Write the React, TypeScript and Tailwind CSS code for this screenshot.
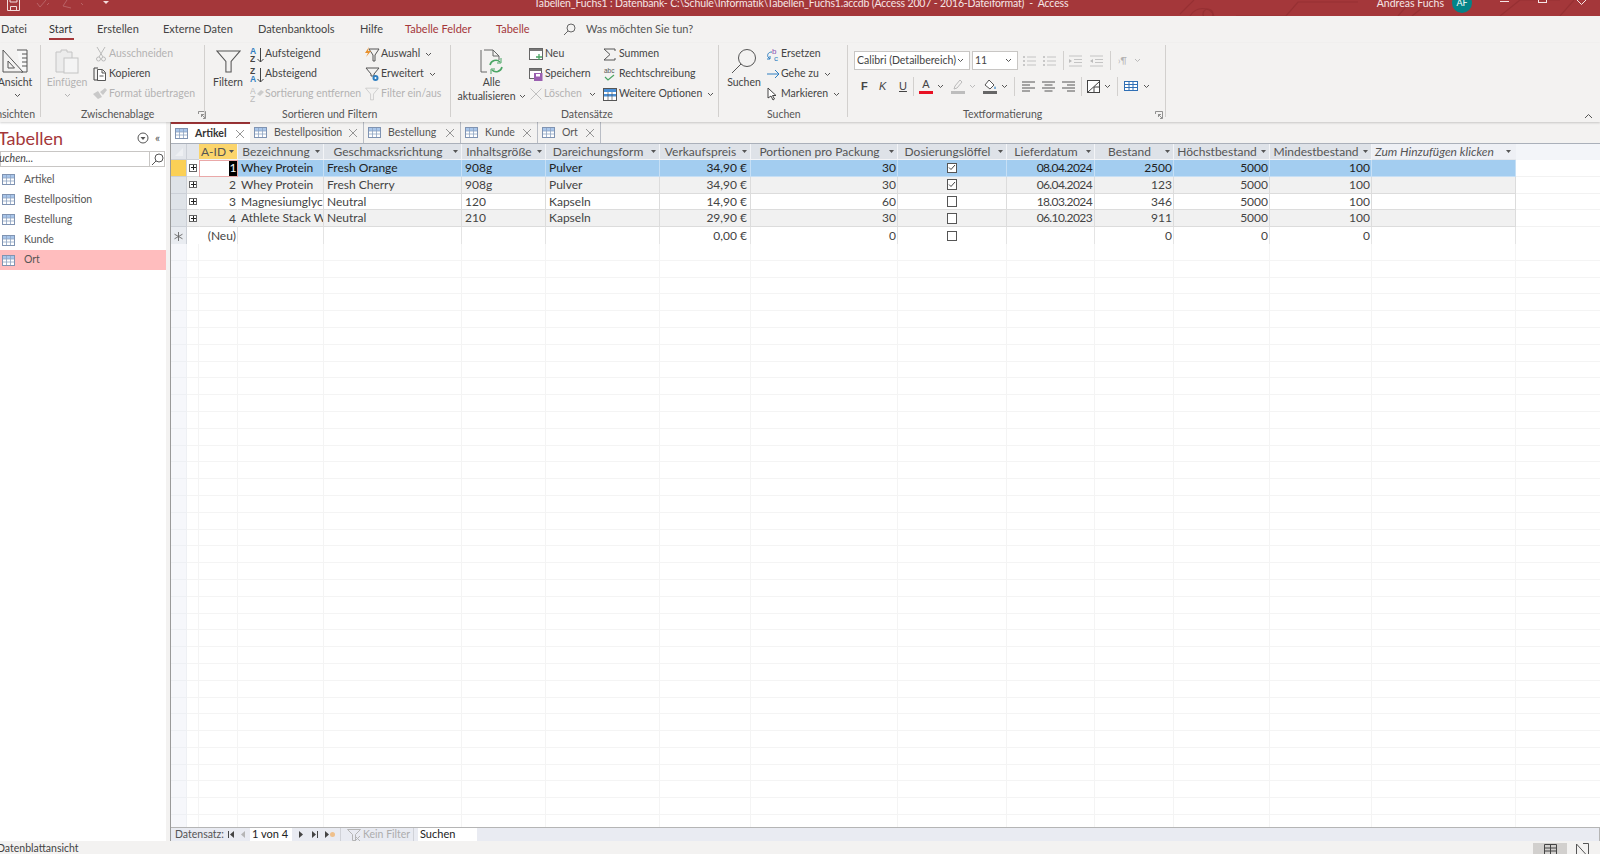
import React from "react";

const GRID_COLS =
  "grid grid-cols-[16px_12px_39px_86px_138px_84px_114px_91px_147px_109px_88px_79px_96px_102px_144px_1fr]";

const columns = [
  "A-ID",
  "Bezeichnung",
  "Geschmacksrichtung",
  "Inhaltsgröße",
  "Dareichungsform",
  "Verkaufspreis",
  "Portionen pro Packung",
  "Dosierungslöffel",
  "Lieferdatum",
  "Bestand",
  "Höchstbestand",
  "Mindestbestand",
];

const rows = [
  ["1", "Whey Protein", "Fresh Orange", "908g", "Pulver", "34,90 €", "30", true, "08.04.2024", "2500", "5000", "100"],
  ["2", "Whey Protein", "Fresh Cherry", "908g", "Pulver", "34,90 €", "30", true, "06.04.2024", "123", "5000", "100"],
  ["3", "Magnesiumglycinat", "Neutral", "120", "Kapseln", "14,90 €", "60", false, "18.03.2024", "346", "5000", "100"],
  ["4", "Athlete Stack Whey", "Neutral", "210", "Kapseln", "29,90 €", "30", false, "06.10.2023", "911", "5000", "100"],
];

const navItems = ["Artikel", "Bestellposition", "Bestellung", "Kunde", "Ort"];

function Chevron({ color = "#555" }: { color?: string }) {
  return (
    <svg width="7" height="5" viewBox="0 0 7 5" className="shrink-0">
      <path d="M1 1l2.500 2.500L6 1" fill="none" stroke={color} strokeWidth="1" />
    </svg>
  );
}

function SortArrow() {
  return (
    <svg width="5" height="3" viewBox="0 0 5 3" className="shrink-0">
      <path d="M0 0h5L2.500 3z" fill="#555" />
    </svg>
  );
}

function TableIcon({ w = 13, h = 11 }: { w?: number; h?: number }) {
  return (
    <svg width={w} height={h} viewBox="0 0 13 11" className="shrink-0">
      <rect x="0.500" y="0.500" width="12" height="10" fill="#fff" stroke="#7f93b2" />
      <rect x="1" y="1" width="11" height="3" fill="#a9c6ea" />
      <path d="M4.500 1v9M8.500 1v9M1 4h11M1 7h11" stroke="#8ea3c2" strokeWidth="0.8" fill="none" />
    </svg>
  );
}

function CloseX() {
  return (
    <svg width="10" height="10" viewBox="0 0 10 10" className="shrink-0">
      <path d="M1 1l8 8M9 1l-8 8" stroke="#8a8a8a" strokeWidth="0.9" fill="none" />
    </svg>
  );
}

function Funnel({ color = "#555", size = 24 }: { color?: string; size?: number }) {
  return (
    <svg width={size} height={size} viewBox="0 0 24 24" className="shrink-0">
      <path d="M1 2h22L14.500 12v10h-5V12z" fill="none" stroke={color} strokeWidth="1" />
    </svg>
  );
}

function Small({
  icon,
  text,
  slot = "w-[16px]",
  disabled = false,
  chevron = false,
}: {
  icon: React.ReactNode;
  text: string;
  slot?: string;
  disabled?: boolean;
  chevron?: boolean;
}) {
  return (
    <div className={`flex h-[20px] items-center whitespace-nowrap ${disabled ? "text-[#b3b3b3]" : "text-[#444]"}`}>
      <span className={`flex shrink-0 items-center justify-start ${slot}`}>{icon}</span>
      <span>{text}</span>
      {chevron && (
        <span className="ml-[5px]">
          <Chevron />
        </span>
      )}
    </div>
  );
}

function Sep() {
  return <div className="mt-[2px] h-[72px] w-px shrink-0 bg-[#d2d0ce]" />;
}

function Expander() {
  return (
    <svg width="8" height="8" viewBox="0 0 8 8" className="shrink-0">
      <path d="M0.500 3V0.500H7.500V7.500H5M7 7L3.500 3.500M3.500 6V3.500H6" fill="none" stroke="#777" strokeWidth="0.8" />
    </svg>
  );
}

function TitleBar() {
  return (
    <div className="relative flex h-[16px] shrink-0 items-start overflow-hidden bg-[#a4373a] text-[10.500px] text-[#f6e6e6]">
      <svg width="1600" height="16" viewBox="0 0 1600 16" className="absolute left-0 top-0">
        <g fill="none" stroke="#963033" strokeWidth="1.2">
          <path d="M1180 14l14-14M1190 16c6-10 20-10 24 0M1236 16h50l12-14h60M1398 16l14-16M1412 16l20-16M1500 16l20-16h40M1560 16l14-16" />
          <circle cx="1208" cy="14" r="5" />
        </g>
      </svg>
      <svg width="13" height="11" viewBox="0 0 13 11" className="relative ml-[7px] shrink-0">
        <path d="M0.500 0v10.500h12V0M3.500 10.500V6.500h6v4M3 0v2h7V0" fill="none" stroke="#f3dcdc" />
      </svg>
      <svg width="50" height="9" viewBox="0 0 50 9" className="relative ml-[15px] shrink-0">
        <path d="M2 3l3 4 6-7M14 3l-2 2M32 0l-4 6 8 2M46 3l2 2" fill="none" stroke="#b96366" />
      </svg>
      <svg width="6" height="3" viewBox="0 0 6 3" className="relative ml-[18px] mt-[1px] shrink-0">
        <path d="M0 0h6L3 3z" fill="#f3dcdc" />
      </svg>
      <span className="relative ml-[425px] -mt-[4px] whitespace-pre tracking-[-0.150px]">
        {"Tabellen_Fuchs1 : Datenbank- C:\\Schule\\Informatik\\Tabellen_Fuchs1.accdb (Access 2007 - 2016-Dateiformat)  -  Access"}
      </span>
      <span className="relative ml-auto -mt-[4px] whitespace-nowrap">Andreas Fuchs</span>
      <span className="relative ml-[8px] -mt-[7px] flex h-[20px] w-[20px] shrink-0 items-center justify-center rounded-full bg-[#038387] text-[9px] text-white">
        AF
      </span>
      <span className="relative ml-[28px] mt-[1px] h-px w-[9px] shrink-0 bg-[#f6e6e6]" />
      <span className="relative ml-[29px] -mt-[4px] h-[7px] w-[9px] shrink-0 border border-[#f6e6e6]" />
      <svg width="9" height="5" viewBox="0 0 9 5" className="relative ml-[30px] mr-[14px] shrink-0">
        <path d="M4.500 4.500L0 0M4.500 4.500L9 0" stroke="#f6e6e6" fill="none" />
      </svg>
    </div>
  );
}

function RibbonTabs() {
  return (
    <div className="flex h-[27px] shrink-0 items-start whitespace-nowrap bg-[#f3f2f1] pt-[4px] text-[11px] leading-[18px] text-[#444]">
      <span className="ml-[1px] w-[48px]">Datei</span>
      <span className="flex h-[20px] w-[48px] flex-col">
        <span className="w-[24px] text-[#333]">Start</span>
        <span className="h-[2px] w-[25px] bg-[#a4373a]" />
      </span>
      <span className="w-[66px]">Erstellen</span>
      <span className="w-[95px]">Externe Daten</span>
      <span className="w-[102px]">Datenbanktools</span>
      <span className="w-[45px]">Hilfe</span>
      <span className="w-[91px] text-[#a4373a]">Tabelle Felder</span>
      <span className="w-[67px] text-[#a4373a]">Tabelle</span>
      <svg width="13" height="13" viewBox="0 0 13 13" className="mt-[3px] shrink-0">
        <circle cx="8" cy="5" r="4" fill="none" stroke="#666" />
        <path d="M5 8l-4 4" stroke="#666" />
      </svg>
      <span className="ml-[10px] text-[#555]">Was möchten Sie tun?</span>
    </div>
  );
}

function Label({ text, cls }: { text: string; cls: string }) {
  return (
    <div className={`mt-auto flex h-[14px] items-center whitespace-nowrap text-[10.500px] text-[#555] ${cls}`}>
      {text}
    </div>
  );
}

function Big({
  icon,
  lines,
  cls,
  disabled = false,
  chevronLine = false,
}: {
  icon: React.ReactNode;
  lines: string[];
  cls: string;
  disabled?: boolean;
  chevronLine?: boolean;
}) {
  return (
    <div className={`flex shrink-0 flex-col items-center whitespace-nowrap pt-[5px] ${cls} ${disabled ? "text-[#b3b3b3]" : "text-[#444]"}`}>
      <span className="flex h-[26px] items-center">{icon}</span>
      {lines.map((l, i) => (
        <span key={l} className="mt-[2px] flex h-[12px] items-center leading-[12px]">
          {l}
          {chevronLine && i === lines.length - 1 && (
            <span className="ml-[3px]">
              <Chevron />
            </span>
          )}
        </span>
      ))}
    </div>
  );
}

const dim = "#b8b8b8";

function Ribbon() {
  return (
    <div className="relative z-10 flex h-[79px] shrink-0 bg-[#f3f2f1] text-[10.500px] shadow-[0_1px_2px_rgba(0,0,0,0.18)]">
      {/* Ansichten */}
      <div className="flex w-[40px] shrink-0 flex-col overflow-hidden">
        <Big
          cls="-ml-[2px] w-[34px]"
          lines={["Ansicht"]}
          icon={
            <svg width="26" height="24" viewBox="0 0 26 24">
              <path d="M15 1h10v22h-6" fill="#f8f8f8" stroke="#555" />
              <path d="M20 5h5M20 9h5M20 13h5M20 17h5" stroke="#555" />
              <path d="M1 1l20 22H1zM6 12l6.500 7H6z" fill="#f3f2f1" stroke="#555" />
            </svg>
          }
        />
        <div className="mt-[5px] flex justify-center pr-[5px]">
          <Chevron />
        </div>
        <Label text="Ansichten" cls="justify-end pr-[5px]" />
      </div>
      <Sep />
      {/* Zwischenablage */}
      <div className="flex w-[163px] shrink-0 flex-col">
        <div className="flex">
          <div className="flex w-[52px] flex-col items-center">
            <Big
              cls=""
              disabled
              lines={["Einfügen"]}
              icon={
                <svg width="24" height="25" viewBox="0 0 24 25">
                  <path d="M1 3h5V1h6v2h5v20H1z" fill="#ececec" stroke="#c4c4c4" />
                  <rect x="9" y="9" width="14" height="15" fill="#f4f4f4" stroke="#c4c4c4" />
                </svg>
              }
            />
            <div className="mt-[5px]">
              <Chevron color="#b3b3b3" />
            </div>
          </div>
          <div className="flex flex-col pt-[1px]">
            <Small
              disabled
              text="Ausschneiden"
              icon={
                <svg width="10" height="15" viewBox="0 0 10 15" className="ml-[3px]">
                  <path d="M1 0l6 10M9 0L3 10" stroke="#bbb" fill="none" />
                  <circle cx="2.500" cy="12" r="2" fill="none" stroke="#bbb" />
                  <circle cx="7.500" cy="12" r="2" fill="none" stroke="#bbb" />
                </svg>
              }
            />
            <Small
              text="Kopieren"
              icon={
                <svg width="14" height="14" viewBox="0 0 14 14">
                  <path d="M5 1H1v12h4" fill="none" stroke="#444" />
                  <path d="M4.500 2.500h5l3 3v8h-8zM9 3v3h3M6.500 9h4" fill="#fff" stroke="#444" strokeWidth="0.9" />
                </svg>
              }
            />
            <Small
              disabled
              text="Format übertragen"
              icon={
                <svg width="14" height="12" viewBox="0 0 14 12">
                  <path d="M0 6l5-3 4 6-4 2zM7 4l5-4 2 2-4 5z" fill="#c9c9c9" />
                </svg>
              }
            />
          </div>
        </div>
        <div className="mt-auto flex h-[14px] items-center pl-[40px] text-[10.500px] text-[#555]">
          <span className="w-[117px] shrink-0">Zwischenablage</span>
          <Expander />
        </div>
      </div>
      <Sep />
      {/* Sortieren und Filtern */}
      <div className="flex w-[245px] shrink-0 flex-col">
        <div className="flex">
          <Big cls="ml-[1px] w-[44px]" lines={["Filtern"]} icon={<Funnel size={25} />} />
          <div className="flex w-[115px] shrink-0 flex-col pt-[1px]">
            <Small
              slot="w-[15px]"
              text="Aufsteigend"
              icon={
                <svg width="14" height="17" viewBox="0 0 14 17">
                  <text x="0" y="7.500" fontSize="8.500" fontWeight="700" fill="#2f7fc1" fontFamily="Liberation Sans">A</text>
                  <text x="0" y="16" fontSize="8.500" fontWeight="700" fill="#444" fontFamily="Liberation Sans">Z</text>
                  <path d="M10.500 2v14M7.500 13l3 3 3-3" fill="none" stroke="#444" />
                </svg>
              }
            />
            <Small
              slot="w-[15px]"
              text="Absteigend"
              icon={
                <svg width="14" height="17" viewBox="0 0 14 17">
                  <text x="0" y="7.500" fontSize="8.500" fontWeight="700" fill="#444" fontFamily="Liberation Sans">Z</text>
                  <text x="0" y="16" fontSize="8.500" fontWeight="700" fill="#2f7fc1" fontFamily="Liberation Sans">A</text>
                  <path d="M10.500 2v14M7.500 13l3 3 3-3" fill="none" stroke="#444" />
                </svg>
              }
            />
            <Small
              slot="w-[15px]"
              disabled
              text="Sortierung entfernen"
              icon={
                <svg width="14" height="17" viewBox="0 0 14 17">
                  <text x="0" y="7.500" fontSize="8.500" fill="#bbb" fontFamily="Liberation Sans">A</text>
                  <text x="0" y="16" fontSize="8.500" fill="#bbb" fontFamily="Liberation Sans">Z</text>
                  <path d="M7 8l4-4 3 2-4 4z" fill="#ccc" />
                </svg>
              }
            />
          </div>
          <div className="flex flex-col pt-[1px]">
            <Small
              text="Auswahl"
              chevron
              icon={
                <svg width="15" height="15" viewBox="0 0 15 15">
                  <path d="M4 2h10L10 8v6H8V8z" fill="none" stroke="#555" />
                  <path d="M4 0L0 6h3L1 10l5-6H3z" fill="#e8912d" />
                </svg>
              }
            />
            <Small
              text="Erweitert"
              chevron
              icon={
                <svg width="15" height="15" viewBox="0 0 15 15">
                  <path d="M1 1h13L9 7v2H6V7z" fill="none" stroke="#555" />
                  <circle cx="10.500" cy="11" r="3" fill="#2f7fc1" />
                  <circle cx="10.500" cy="11" r="1" fill="#fff" />
                </svg>
              }
            />
            <Small disabled text="Filter ein/aus" icon={<Funnel color={dim} size={14} />} />
          </div>
        </div>
        <Label text="Sortieren und Filtern" cls="pl-[77px]" />
      </div>
      <Sep />
      {/* Datensätze */}
      <div className="flex w-[267px] shrink-0 flex-col">
        <div className="flex">
          <Big
            cls="ml-[3px] w-[75px]"
            chevronLine
            lines={["Alle", "aktualisieren"]}
            icon={
              <svg width="25" height="25" viewBox="0 0 25 25">
                <path d="M2 1v22h6M5 1h9l6 6v4M14 1v6h6" fill="none" stroke="#666" />
                <path d="M11 16a6 6 0 0 1 10-3M23 18a6 6 0 0 1-10 3" fill="none" stroke="#4aa564" strokeWidth="1.600" />
                <path d="M22 9v5h-4M12 25v-5h4" fill="none" stroke="#4aa564" />
              </svg>
            }
          />
          <div className="flex w-[74px] shrink-0 flex-col pt-[1px]">
            <Small
              text="Neu"
              icon={
                <svg width="14" height="13" viewBox="0 0 14 13">
                  <rect x="0.500" y="0.500" width="13" height="11" fill="#fff" stroke="#666" />
                  <rect x="1" y="1" width="12" height="2" fill="#777" />
                  <path d="M10 6v6M7 9h6" stroke="#4aa564" strokeWidth="1.300" />
                </svg>
              }
            />
            <Small
              text="Speichern"
              icon={
                <svg width="14" height="13" viewBox="0 0 14 13">
                  <rect x="0.500" y="0.500" width="12" height="10" fill="#fff" stroke="#666" />
                  <rect x="1" y="1" width="11" height="2" fill="#777" />
                  <rect x="5" y="5" width="8.500" height="8" fill="#9a5fb0" />
                  <rect x="7" y="6" width="4" height="2.500" fill="#fff" />
                </svg>
              }
            />
            <div className="flex h-[20px] items-center whitespace-nowrap text-[#b3b3b3]">
              <span className="flex w-[15px] shrink-0 items-center">
                <svg width="12" height="12" viewBox="0 0 12 12" className="ml-[1px]">
                  <path d="M0.500 0.500l11 11M11.500 0.500l-11 11" stroke="#c0c0c0" />
                </svg>
              </span>
              <span className="w-[45px] shrink-0">Löschen</span>
              <Chevron />
            </div>
          </div>
          <div className="flex flex-col pt-[1px]">
            <Small
              text="Summen"
              icon={
                <svg width="13" height="13" viewBox="0 0 13 13">
                  <path d="M12 3V1H1l6 5.500L1 12h11v-2" fill="none" stroke="#555" />
                </svg>
              }
            />
            <Small
              text="Rechtschreibung"
              icon={
                <svg width="13" height="14" viewBox="0 0 13 14">
                  <text x="1" y="6" fontSize="6.500" fill="#555" fontFamily="Liberation Sans">abc</text>
                  <path d="M2 10l3 3 6-5" fill="none" stroke="#4aa564" strokeWidth="1.200" />
                </svg>
              }
            />
            <Small
              text="Weitere Optionen"
              chevron
              icon={
                <svg width="14" height="13" viewBox="0 0 14 13">
                  <rect x="0.500" y="0.500" width="13" height="12" fill="#fff" stroke="#555" />
                  <rect x="1" y="1" width="12" height="3" fill="#4a90d6" />
                  <rect x="1" y="6" width="12" height="2.500" fill="#4a90d6" />
                  <path d="M5 4v8M9 4v8" stroke="#555" strokeWidth="0.700" />
                </svg>
              }
            />
          </div>
        </div>
        <Label text="Datensätze" cls="pl-[110px]" />
      </div>
      <Sep />
      {/* Suchen */}
      <div className="flex w-[128px] shrink-0 flex-col">
        <div className="flex">
          <Big
            cls="ml-[2px] w-[46px]"
            lines={["Suchen"]}
            icon={
              <svg width="26" height="25" viewBox="0 0 26 25">
                <circle cx="16" cy="9" r="8.500" fill="none" stroke="#555" />
                <path d="M10 15L1 24" stroke="#555" />
              </svg>
            }
          />
          <div className="flex flex-col pt-[1px]">
            <Small
              slot="w-[14px]"
              text="Ersetzen"
              icon={
                <svg width="13" height="15" viewBox="0 0 13 15">
                  <text x="5" y="7" fontSize="8" fill="#8a4fb0" fontFamily="Liberation Sans">b</text>
                  <text x="7" y="14" fontSize="8" fill="#2f7fc1" fontFamily="Liberation Sans">c</text>
                  <path d="M5 5C1 5 0 8 1 10l2 2M0 12h3V9" fill="none" stroke="#2f7fc1" />
                </svg>
              }
            />
            <Small
              slot="w-[14px]"
              text="Gehe zu"
              chevron
              icon={
                <svg width="13" height="10" viewBox="0 0 13 10">
                  <path d="M0 5h12M8 1l4 4-4 4" fill="none" stroke="#2f7fc1" />
                </svg>
              }
            />
            <Small
              slot="w-[14px]"
              text="Markieren"
              chevron
              icon={
                <svg width="10" height="14" viewBox="0 0 10 14">
                  <path d="M1 1v10l3-2 2 4 1.500-1-2-3.500h3.500z" fill="#fff" stroke="#444" />
                </svg>
              }
            />
          </div>
        </div>
        <Label text="Suchen" cls="pl-[48px]" />
      </div>
      <Sep />
      <TextFormat />
      <Sep />
      <div className="mb-[3px] ml-auto mr-[7px] mt-auto">
        <svg width="9" height="6" viewBox="0 0 9 6">
          <path d="M1 5l3.500-3.500L8 5" fill="none" stroke="#555" />
        </svg>
      </div>
    </div>
  );
}

function ListIcon({ variant }: { variant: number }) {
  return (
    <svg width="13" height="12" viewBox="0 0 13 12" className="shrink-0">
      {variant < 2 ? (
        <>
          <path d="M0 2h2M0 6h2M0 10h2" stroke="#bbb" strokeWidth="1.400" />
          <path d="M4 2h9M4 6h9M4 10h9" stroke="#c4c4c4" />
        </>
      ) : (
        <>
          <path d="M0 1h13M5 4.500h8M5 7.500h8M0 11h13" stroke="#c4c4c4" />
          <path d={variant === 2 ? "M0 4l3 2-3 2z" : "M3 4L0 6l3 2z"} fill="#bbb" />
        </>
      )}
    </svg>
  );
}

function AlignIcon({ kind }: { kind: "l" | "c" | "r" }) {
  const paths = {
    l: "M0 1h13M0 4h8M0 7h13M0 10h8",
    c: "M0 1h13M2.500 4h8M0 7h13M2.500 10h8",
    r: "M0 1h13M5 4h8M0 7h13M5 10h8",
  };
  return (
    <svg width="13" height="11" viewBox="0 0 13 11" className="shrink-0">
      <path d={paths[kind]} stroke="#555" />
    </svg>
  );
}

function VSep({ cls }: { cls: string }) {
  return <span className={`h-[19px] w-px shrink-0 bg-[#d2d0ce] ${cls}`} />;
}

function TextFormat() {
  return (
    <div className="flex w-[317px] shrink-0 flex-col">
      <div className="ml-[6px] mt-[8px] flex h-[19px] items-center">
        <div className="flex h-[19px] w-[116px] shrink-0 items-center justify-between border border-[#c8c6c4] bg-white pl-[2px] pr-[5px] text-[10.500px] text-[#444]">
          <span className="whitespace-nowrap">Calibri (Detailbereich)</span>
          <Chevron />
        </div>
        <div className="ml-[2px] flex h-[19px] w-[46px] shrink-0 items-center justify-between border border-[#c8c6c4] bg-white pl-[2px] pr-[5px] text-[10.500px] text-[#444]">
          <span>11</span>
          <Chevron />
        </div>
        <span className="ml-[5px]"><ListIcon variant={0} /></span>
        <span className="ml-[7px]"><ListIcon variant={1} /></span>
        <VSep cls="ml-[7px]" />
        <span className="ml-[5px]"><ListIcon variant={2} /></span>
        <span className="ml-[8px]"><ListIcon variant={3} /></span>
        <VSep cls="ml-[7px]" />
        <span className="ml-[7px] text-[9px] text-[#b3b3b3]">›¶</span>
        <span className="ml-[7px]"><Chevron color="#bbb" /></span>
      </div>
      <div className="ml-[13px] mt-[6px] flex h-[20px] items-center text-[11px] text-[#444]">
        <span className="w-[6px] font-[Liberation_Sans,sans-serif] font-bold">F</span>
        <span className="ml-[12px] w-[6px] font-[Liberation_Sans,sans-serif] italic">K</span>
        <span className="ml-[14px] w-[7px] font-[Liberation_Sans,sans-serif] underline">U</span>
        <VSep cls="ml-[7px]" />
        <span className="ml-[5px] flex w-[14px] flex-col items-center">
          <span className="h-[11px] font-[Liberation_Sans,sans-serif] text-[11px] leading-[11px]">A</span>
          <span className="mt-[1px] h-[3px] w-[14px] bg-[#e81123]" />
        </span>
        <span className="ml-[4px]"><Chevron /></span>
        <svg width="14" height="15" viewBox="0 0 14 15" className="ml-[7px] shrink-0">
          <path d="M3 10l1-3 5-6 2 2-5 6z" fill="none" stroke="#bbb" />
          <rect x="0" y="12" width="14" height="3" fill="#bdbdbd" />
        </svg>
        <span className="ml-[4px]"><Chevron color="#bbb" /></span>
        <svg width="14" height="15" viewBox="0 0 14 15" className="ml-[7px] shrink-0">
          <path d="M2 6l4-5 5 5-4 4z" fill="#fff" stroke="#555" />
          <path d="M12 7c1 2 1 3 0 3s-1-1 0-3z" fill="#2f7fc1" />
          <rect x="0" y="12" width="14" height="3" fill="#666" />
        </svg>
        <span className="ml-[4px]"><Chevron /></span>
        <VSep cls="ml-[6px]" />
        <span className="ml-[7px]"><AlignIcon kind="l" /></span>
        <span className="ml-[7px]"><AlignIcon kind="c" /></span>
        <span className="ml-[7px]"><AlignIcon kind="r" /></span>
        <VSep cls="ml-[6px]" />
        <svg width="13" height="13" viewBox="0 0 13 13" className="ml-[5px] shrink-0">
          <rect x="0.500" y="0.500" width="12" height="12" fill="#fff" stroke="#444" />
          <path d="M1 12L12 2M7 7v5M7 7h5" stroke="#444" fill="none" />
        </svg>
        <span className="ml-[4px]"><Chevron /></span>
        <VSep cls="ml-[6px]" />
        <svg width="14" height="10" viewBox="0 0 14 10" className="ml-[6px] shrink-0">
          <rect x="0.500" y="0.500" width="13" height="9" fill="#fff" stroke="#2f6fb5" />
          <path d="M1 3.500h12M5 1v8M9 1v8M1 6.500h12" stroke="#2f6fb5" />
        </svg>
        <span className="ml-[5px]"><Chevron /></span>
      </div>
      <div className="mt-auto flex h-[14px] items-center pl-[115px] text-[10.500px] text-[#555]">
        <span className="w-[192px] shrink-0">Textformatierung</span>
        <Expander />
      </div>
    </div>
  );
}

function NavPane() {
  return (
    <div className="flex w-[166px] shrink-0 flex-col bg-white">
      <div className="flex h-[29px] items-center pt-[2px]">
        <span className="-ml-[2px] w-[139px] shrink-0 text-[18px] leading-[24px] text-[#a4373a]">Tabellen</span>
        <svg width="12" height="12" viewBox="0 0 12 12" className="shrink-0">
          <circle cx="6" cy="6" r="5" fill="none" stroke="#555" />
          <path d="M3.500 5h5L6 8z" fill="#555" />
        </svg>
        <span className="ml-[6px] text-[12px] leading-none text-[#555]">«</span>
      </div>
      <div className="mr-[1px] flex h-[16px] items-center justify-between border border-[#c8c6c4] bg-white">
        <span className="-ml-[7px] text-[10.500px] italic text-[#444]">Suchen...</span>
        <span className="flex h-[14px] w-[15px] items-center justify-center border-l border-[#c8c6c4]">
          <svg width="13" height="13" viewBox="0 0 13 13">
            <circle cx="8" cy="5" r="4" fill="none" stroke="#555" />
            <path d="M5 8l-4 4" stroke="#555" />
          </svg>
        </span>
      </div>
      <div className="mt-[2.500px] flex flex-col">
        {navItems.map((n) => (
          <div
            key={n}
            className={`flex h-[20.200px] items-center text-[10.500px] text-[#555] ${n === "Ort" ? "bg-[#ffbdbe]" : ""}`}
          >
            <span className="ml-[2px]">
              <TableIcon />
            </span>
            <span className="ml-[9px]">{n}</span>
          </div>
        ))}
      </div>
    </div>
  );
}

function DocTab({ name, active = false, width }: { name: string; active?: boolean; width: string }) {
  return (
    <div
      className={`flex h-[21px] shrink-0 items-center whitespace-nowrap pl-[4px] text-[10.500px] ${width} ${
        active
          ? "border-t-2 border-t-[#a4373a] bg-white font-bold text-[#333]"
          : "border-r border-r-[#b9bdc5] text-[#555]"
      }`}
    >
      <TableIcon />
      <span className="ml-[7px]">{name}</span>
      <span className="ml-auto mr-[5px]">
        <CloseX />
      </span>
    </div>
  );
}

function CheckBox({ checked }: { checked: boolean }) {
  return (
    <span className="flex h-[10.500px] w-[10.500px] items-center justify-center border border-[#555] bg-white">
      {checked && (
        <svg width="8" height="7" viewBox="0 0 8 7">
          <path d="M1 3.500l2 2 4-4.500" fill="none" stroke="#444" />
        </svg>
      )}
    </span>
  );
}

function PlusBox() {
  return (
    <span className="flex h-[7.500px] w-[7.500px] items-center justify-center border border-[#666] bg-white">
      <svg width="5" height="5" viewBox="0 0 5 5">
        <path d="M0 2.500h5M2.500 0v5" stroke="#222" />
      </svg>
    </span>
  );
}

function Datasheet() {
  const cell = "flex items-center overflow-hidden whitespace-nowrap border-r border-b";
  return (
    <div className="flex min-h-0 flex-1 flex-col overflow-hidden text-[12px] text-[#444]">
      {/* header */}
      <div className={`${GRID_COLS} h-[17px] shrink-0 border-t border-t-[#aab0ba] text-[#555]`}>
        <div className="flex items-center justify-center border-b border-r border-[#ccd0d7] bg-[#e3e6eb]">
          <svg width="10" height="10" viewBox="0 0 10 10">
            <path d="M9 1v8H1z" fill="#eef0f3" />
          </svg>
        </div>
        <div className="border-b border-[#ccd0d7] bg-[#e3e6eb]" />
        {columns.map((c, i) => (
          <div
            key={c}
            className={`flex items-center overflow-hidden whitespace-nowrap border-b border-r border-[#f3f4f7] ${
              i === 0 ? "bg-[#fbd56c]" : "bg-[#dee2e8]"
            }`}
          >
            <span className="flex-1 text-center">{c}</span>
            <span className="mr-[3px] flex w-[6px] shrink-0 justify-center">
              <SortArrow />
            </span>
          </div>
        ))}
        <div className="flex items-center overflow-hidden whitespace-nowrap border-b border-[#e4e7ec] bg-[#eef0f5] pl-[3px] italic">
          <span className="flex-1">Zum Hinzufügen klicken</span>
          <span className="mr-[5px] flex">
            <SortArrow />
          </span>
        </div>
        <div className="bg-[#f3f5f9]" />
      </div>
      {/* rows */}
      {rows.map((r, idx) => {
        const sel = idx === 0;
        const alt = idx % 2 === 1;
        const bg = sel ? "bg-[#a3cdf0] text-[#222]" : alt ? "bg-[#f1f1f1]" : "bg-white";
        const line = sel ? "border-[#c6dff5]" : "border-[#dcdcdc]";
        return (
          <div key={idx} className={`${GRID_COLS} h-[16.800px] shrink-0`}>
            <div className={`border-b border-r border-[#ccd0d7] ${sel ? "bg-[#fbd056]" : "bg-[#dfe3e8]"}`} />
            <div className={`flex items-center justify-center border-b border-[#dcdcdc] ${alt ? "bg-[#f1f1f1]" : "bg-white"}`}>
              <PlusBox />
            </div>
            <div
              className={`flex items-center justify-end overflow-hidden border ${
                sel ? "border-[#eaa8a8] bg-white" : `${alt ? "bg-[#f1f1f1]" : "bg-white"} border-transparent border-b-[#dcdcdc] pr-[1px]`
              }`}
            >
              {sel ? <span className="bg-black px-[0.500px] text-white">1</span> : (r[0] as string)}
            </div>
            <div className={`${cell} ${line} ${bg} pl-[3px]`}>{r[1] as string}</div>
            <div className={`${cell} ${line} ${bg} pl-[3px]`}>{r[2] as string}</div>
            <div className={`${cell} ${line} ${bg} pl-[3px]`}>{r[3] as string}</div>
            <div className={`${cell} ${line} ${bg} pl-[3px]`}>{r[4] as string}</div>
            <div className={`${cell} ${line} ${bg} justify-end pr-[3px]`}>{r[5] as string}</div>
            <div className={`${cell} ${line} ${bg} justify-end pr-[1px]`}>{r[6] as string}</div>
            <div className={`${cell} ${line} ${bg} justify-center`}>
              <CheckBox checked={r[7] as boolean} />
            </div>
            <div className={`${cell} ${line} ${bg} justify-end pr-[2px] tracking-[-0.600px]`}>{r[8] as string}</div>
            <div className={`${cell} ${line} ${bg} justify-end pr-[1px]`}>{r[9] as string}</div>
            <div className={`${cell} ${line} ${bg} justify-end pr-[1px]`}>{r[10] as string}</div>
            <div className={`${cell} ${line} ${bg} justify-end pr-[1px]`}>{r[11] as string}</div>
            <div className={`${cell} ${line} ${bg}`} />
            <div className="border-b border-[#f2f2f2] bg-white" />
          </div>
        );
      })}
      {/* new record */}
      <div className={`${GRID_COLS} h-[16.800px] shrink-0 border-b border-b-[#dcdcdc]`}>
        <div className="flex items-center justify-center border-r border-[#ccd0d7] bg-[#e9ecf1]">
          <svg width="9" height="9" viewBox="0 0 9 9">
            <path d="M4.500 0v9M0.500 2.200l8 4.600M8.500 2.200l-8 4.600" stroke="#666" strokeWidth="0.900" />
          </svg>
        </div>
        <div className="bg-white" />
        <div className="flex items-center justify-end whitespace-nowrap border-r border-[#e4e4e4] bg-white pr-[1px]">(Neu)</div>
        {["", "", "", "", "0,00 €", "0", "cb", "", "0", "0", "0", ""].map((v, i) => (
          <div
            key={i}
            className={`flex items-center border-r border-[#e4e4e4] bg-white ${
              v === "cb" ? "justify-center" : i === 4 ? "justify-end pr-[3px]" : "justify-end pr-[1px]"
            }`}
          >
            {v === "cb" ? <CheckBox checked={false} /> : v}
          </div>
        ))}
        <div className="bg-white" />
        <div className="bg-white" />
      </div>
      {/* empty sheet lines */}
      {Array.from({ length: 35 }).map((_, i) => (
        <div key={i} className={`${GRID_COLS} h-[16.800px] shrink-0`}>
          <div className="border-b border-r border-[#eef0f4] bg-[#f6f7fb]" />
          {Array.from({ length: 15 }).map((__, j) => (
            <div key={j} className={`border-b border-[#f4f4f4] ${j < 14 ? "border-r" : ""}`} />
          ))}
        </div>
      ))}
    </div>
  );
}

function RecordBar() {
  return (
    <div className="flex h-[14px] shrink-0 items-center whitespace-nowrap border-t border-[#b5b5b5] bg-[#e9ebf2] text-[10.500px] text-[#555]">
      <span className="ml-[4px] w-[48px] shrink-0">Datensatz:</span>
      <span className="ml-[5px] flex">
        <svg width="6" height="7" viewBox="0 0 6 7">
          <path d="M0 0h1v7H0zM6 0v7L2 3.500z" fill="#444" />
        </svg>
      </span>
      <span className="ml-[7px] flex">
        <svg width="4" height="7" viewBox="0 0 4 7">
          <path d="M4 0v7L0 3.500z" fill="#b5b5b5" />
        </svg>
      </span>
      <span className="ml-[5px] flex h-[13px] w-[42px] items-center bg-white pl-[2px] text-[11px] text-[#222]">1 von 4</span>
      <span className="ml-[7px] flex">
        <svg width="4" height="7" viewBox="0 0 4 7">
          <path d="M0 0v7l4-3.500z" fill="#444" />
        </svg>
      </span>
      <span className="ml-[9px] flex">
        <svg width="6" height="7" viewBox="0 0 6 7">
          <path d="M0 0v7l4-3.500zM5 0h1v7H5z" fill="#444" />
        </svg>
      </span>
      <span className="ml-[7px] flex">
        <svg width="10" height="7" viewBox="0 0 10 7">
          <path d="M0 0v7l4-3.500z" fill="#444" />
          <circle cx="7.500" cy="3.500" r="2.500" fill="#efc08c" />
        </svg>
      </span>
      <span className="ml-[5px] h-[13px] w-px shrink-0 bg-[#d0d2d8]" />
      <span className="ml-[6px] flex">
        <svg width="15" height="12" viewBox="0 0 15 12">
          <path d="M0.500 0.500h13l-5 5v6h-3v-6z" fill="none" stroke="#b5b5b5" />
          <path d="M8 7l5 5M13 7l-5 5" stroke="#b5b5b5" />
        </svg>
      </span>
      <span className="ml-[1px] w-[50px] shrink-0 text-[#adadad]">Kein Filter</span>
      <span className="h-[13px] w-px shrink-0 bg-[#d0d2d8]" />
      <span className="ml-[4px] flex h-[13px] w-[59px] shrink-0 items-center bg-white pl-[2px] text-[11px] text-[#222]">Suchen</span>
      <div className="h-full flex-1 border-r border-[#b5b5b5]" />
    </div>
  );
}

export default function App() {
  return (
    <div className="flex h-[854px] w-[1600px] flex-col overflow-hidden bg-[#f3f2f1] font-[Lato,sans-serif]">
      <TitleBar />
      <RibbonTabs />
      <Ribbon />
      <div className="flex min-h-0 flex-1">
        <NavPane />
        <div className="w-[4px] shrink-0 bg-[#f3f2f1]" />
        <div className="flex min-w-0 flex-1 flex-col border-l border-l-[#9a9a9a] bg-white">
          <div className="flex h-[21px] shrink-0 items-end bg-[#f3f2f1]">
            <DocTab name="Artikel" active width="w-[79px]" />
            <DocTab name="Bestellposition" width="w-[114px]" />
            <DocTab name="Bestellung" width="w-[97px]" />
            <DocTab name="Kunde" width="w-[77px]" />
            <DocTab name="Ort" width="w-[63px]" />
          </div>
          <Datasheet />
          <RecordBar />
        </div>
      </div>
      <div className="flex h-[13px] shrink-0 items-end overflow-hidden whitespace-nowrap bg-[#f3f2f1] text-[10.500px] text-[#444]">
        <span className="-ml-[3px] leading-[12px]">Datenblattansicht</span>
        <div className="ml-auto flex h-[11px] w-[34px] items-start justify-center bg-[#d2d0ce] pt-[1px]">
          <svg width="13" height="11" viewBox="0 0 13 11">
            <path d="M0.500 0.500h12v10h-12zM0.500 4h12M0.500 7h12M6.500 0.500v10" fill="none" stroke="#444" />
          </svg>
        </div>
        <span className="ml-[9px] mr-[11px] flex h-[11px] items-start">
          <svg width="13" height="13" viewBox="0 0 13 13">
            <path d="M7 0.500h5.500v12H7" fill="none" stroke="#555" />
            <path d="M0.500 1l10 11h-10z" fill="#f3f2f1" stroke="#555" />
          </svg>
        </span>
      </div>
    </div>
  );
}
